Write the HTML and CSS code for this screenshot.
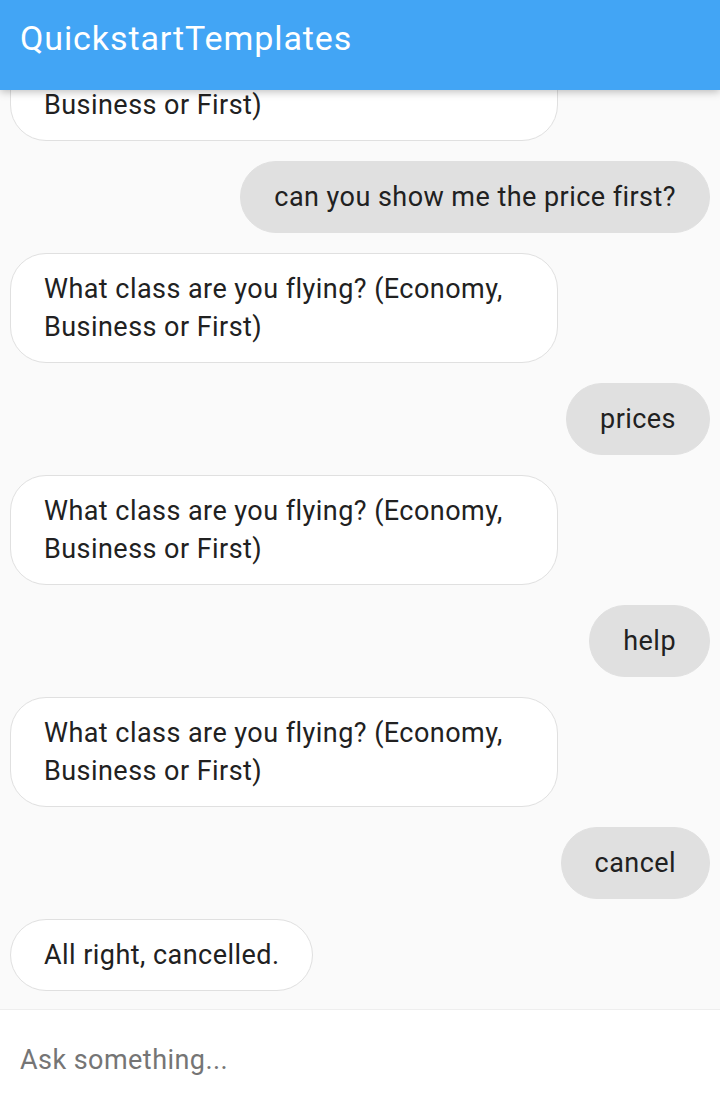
FILE: index.html
```html
<!DOCTYPE html>
<html lang="en">
<head>
  <meta charset="UTF-8">
  <title>QuickstartTemplates</title>
  <meta name="viewport" content="width=device-width, initial-scale=1.0" />
  <link rel="stylesheet" href="styles.css">
</head>
<body>

  <div class="app">
    <header class="app-bar">
      <h1>QuickstartTemplates</h1>
    </header>

    <main class="chat">
      <div class="msg bot">What class are you flying? (Economy, Business or First)</div>
      <div class="msg user">can you show me the price first?</div>
      <div class="msg bot">What class are you flying? (Economy, Business or First)</div>
      <div class="msg user">prices</div>
      <div class="msg bot">What class are you flying? (Economy, Business or First)</div>
      <div class="msg user">help</div>
      <div class="msg bot">What class are you flying? (Economy, Business or First)</div>
      <div class="msg user">cancel</div>
      <div class="msg bot">All right, cancelled.</div>
    </main>

    <footer class="composer">
      <input type="text" placeholder="Ask something..." />
    </footer>
  </div>

</body>
</html>
```

FILE: styles.css
```css
body {
  margin: 0;
  padding: 0;
  font-family: Roboto, 'Noto Sans', sans-serif;
  background: #fafafa;
}

.app {
  height: 100vh;
  display: flex;
  flex-direction: column;
  overflow: hidden;
}

.app-bar {
  position: relative;
  z-index: 2;
  height: 90px;
  flex-shrink: 0;
  background: #42a5f5;
  box-shadow: 0 2px 8px rgba(0, 0, 0, 0.25);
  display: flex;
  align-items: flex-start;
  padding: 0 20px;
}

.app-bar h1 {
  margin: 0;
  padding-top: 18px;
  color: #fff;
  font-weight: 400;
  font-size: 34px;
  letter-spacing: 0.9px;
  line-height: 40px;
}

.chat {
  flex: 1;
  min-height: 0;
  overflow: hidden;
  display: flex;
  flex-direction: column;
  justify-content: flex-end;
  padding: 0 10px 8px;
}

.msg {
  flex-shrink: 0;
  max-width: 480px;
  margin: 10px 0;
  padding: 16px 33px;
  border-radius: 36px;
  font-size: 27px;
  letter-spacing: 0.45px;
  line-height: 38px;
  color: #212121;
}

.bot {
  align-self: flex-start;
  background: #fff;
  border: 1px solid #e0e0e0;
}

.user {
  align-self: flex-end;
  background: #e0e0e0;
  border: 1px solid #e0e0e0;
}

.composer {
  height: 89px;
  flex-shrink: 0;
  background: #fff;
  border-top: 1px solid #eeeeee;
  display: flex;
  align-items: center;
  padding-top: 12px;
  box-sizing: border-box;
}

.composer input {
  width: 100%;
  border: none;
  outline: none;
  padding: 0 20px;
  font-family: inherit;
  font-size: 27px;
  letter-spacing: 0.45px;
  color: #212121;
  background: transparent;
}

.composer input::placeholder {
  color: #757575;
}
```
